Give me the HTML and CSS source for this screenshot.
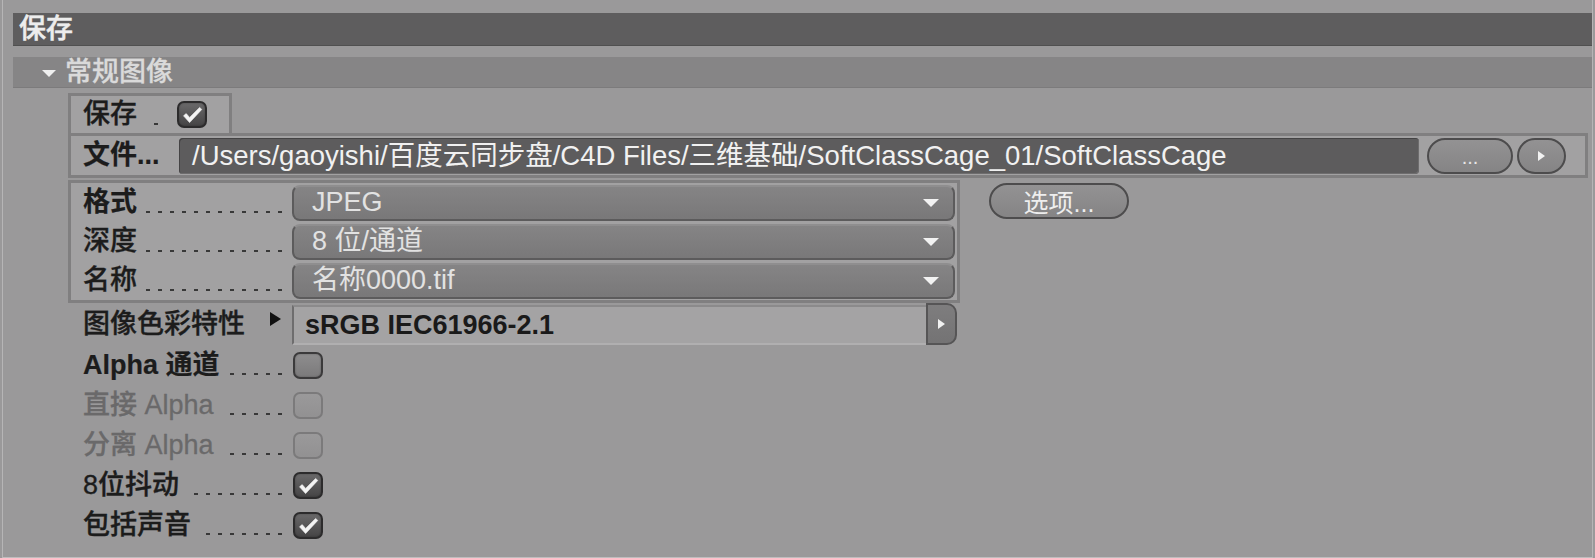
FILE: index.html
```html
<!DOCTYPE html>
<html lang="zh">
<head>
<meta charset="utf-8">
<title>保存</title>
<link rel="stylesheet" href="styles.css">
</head>
<body>
<div class="window">
  <div class="title">保存</div>
  <div class="section"><span class="tri-down"></span>常规图像</div>
  <div class="content">
    <div class="box box-save">
      <span class="lbl save-lbl">保存</span>
      <span class="leader short"></span>
      <span class="check on"><svg viewBox="0 0 30 27" width="30" height="27"><path d="M6.5 14.8 L9.2 12.6 L12.6 16.4 L22.6 6.4 L24.8 8.4 L12.6 21.6 Z" /></svg></span>
    </div>
    <div class="box box-file">
      <span class="lbl bold file-lbl">文件...</span>
      <div class="path">/Users/gaoyishi/百度云同步盘/C4D Files/三维基础/SoftClassCage_01/SoftClassCage</div>
      <div class="pill more">...</div>
      <div class="pill go"><span class="tri-right-w"></span></div>
    </div>
    <div class="format-row">
      <div class="box group">
        <div class="row grow">
          <div class="lbl-col"><span class="lbl bold">格式</span><span class="leader"></span></div>
          <div class="dropdown"><span>JPEG</span><span class="arr"></span></div>
        </div>
        <div class="row grow">
          <div class="lbl-col"><span class="lbl">深度</span><span class="leader"></span></div>
          <div class="dropdown"><span>8 位/通道</span><span class="arr"></span></div>
        </div>
        <div class="row grow">
          <div class="lbl-col"><span class="lbl">名称</span><span class="leader"></span></div>
          <div class="dropdown"><span>名称0000.tif</span><span class="arr"></span></div>
        </div>
      </div>
      <div class="pill options">选项...</div>
    </div>
    <div class="row profile">
      <div class="lbl-col"><span class="lbl">图像色彩特性</span><span class="tri-right-b"></span></div>
      <div class="profile-field">sRGB IEC61966-2.1</div>
      <div class="profile-btn"><span class="tri-right-w"></span></div>
    </div>
    <div class="row crow">
      <div class="lbl-col"><span class="lbl bold">Alpha 通道</span><span class="leader"></span></div>
      <span class="check"></span>
    </div>
    <div class="row crow">
      <div class="lbl-col"><span class="lbl dis">直接 Alpha</span><span class="leader"></span></div>
      <span class="check disabled"></span>
    </div>
    <div class="row crow">
      <div class="lbl-col"><span class="lbl dis">分离 Alpha</span><span class="leader"></span></div>
      <span class="check disabled"></span>
    </div>
    <div class="row crow">
      <div class="lbl-col"><span class="lbl">8位抖动</span><span class="leader"></span></div>
      <span class="check on"><svg viewBox="0 0 30 27" width="30" height="27"><path d="M6.5 14.8 L9.2 12.6 L12.6 16.4 L22.6 6.4 L24.8 8.4 L12.6 21.6 Z" /></svg></span>
    </div>
    <div class="row crow">
      <div class="lbl-col"><span class="lbl">包括声音</span><span class="leader"></span></div>
      <span class="check on"><svg viewBox="0 0 30 27" width="30" height="27"><path d="M6.5 14.8 L9.2 12.6 L12.6 16.4 L22.6 6.4 L24.8 8.4 L12.6 21.6 Z" /></svg></span>
    </div>
  </div>
</div>
</body>
</html>
```

FILE: styles.css
```css
* { box-sizing: border-box; }

body {
  margin: 0;
  background: #9a999a;
  font-family: "Liberation Sans", "Noto Sans CJK SC", sans-serif;
  font-size: 27px;
  color: #1c1c1c;
}

.window {
  height: 558px;
  margin: 0 2px;
  border-left: 1px solid #b6b5b6;
  border-right: 1px solid #b6b5b6;
  border-bottom: 1px solid #bebdbe;
  padding: 13px 0 0 10px;
  overflow: hidden;
}

.title {
  height: 33px;
  background: #5e5d5e;
  color: #ededed;
  line-height: 33px;
  padding-left: 6px;
  font-weight: 500;
  -webkit-text-stroke: 0.5px #ededed;
  box-shadow: inset 0 -1px 0 #505050;
}

.section {
  margin-top: 11px;
  height: 31px;
  background: #868586;
  color: #dadada;
  display: flex;
  align-items: center;
  padding-left: 29px;
  line-height: 31px;
  font-weight: 500;
  -webkit-text-stroke: 0.3px #dadada;
  box-shadow: inset 0 -1px 0 #7c7b7c;
}

.tri-down {
  width: 0;
  height: 0;
  border-left: 7px solid transparent;
  border-right: 7px solid transparent;
  border-top: 7px solid #efefef;
  margin-right: 9px;
  margin-top: 2px;
}

.content {
  padding: 5px 0 0 55px;
}

.box {
  border: 3px solid #807f80;
  background: #a2a1a2;
}

.lbl {
  white-space: nowrap;
  line-height: 1;
  font-weight: 500;
  -webkit-text-stroke: 0.35px #1c1c1c;
}
.lbl.bold { font-weight: bold; -webkit-text-stroke: 0.2px #1c1c1c; }
.lbl.dis { color: #6a696a; -webkit-text-stroke: 0.3px #6a696a; }

.leader {
  flex: 1;
  height: 2px;
  margin: 18px 10px 0 8px;
  background: repeating-linear-gradient(to left, #383838 0 4px, transparent 4px 12px);
}

.box-save {
  width: 164px;
  height: 43px;
  display: flex;
  align-items: center;
  padding: 0 21px 0 12px;
}
.save-lbl { width: 54px; }
.leader.short {
  flex: none;
  width: 4px;
  margin: 18px 19px 0 17px;
}

.check {
  width: 30px;
  height: 27px;
  border-radius: 7px;
  border: 2px solid #3b3a3b;
  background: linear-gradient(#8e8d8e, #7b7a7b);
  display: flex;
  flex: none;
  box-shadow: inset 0 0 2px rgba(0,0,0,0.3);
}
.check svg {
  margin: -2px;
}
.check svg path {
  fill: #f4f4f4;
  stroke: #f4f4f4;
  stroke-width: 0.6;
  stroke-linejoin: round;
}
.check.on {
  background: linear-gradient(#6a696a, #454445);
  border-color: #2c2b2c;
}
.check.disabled {
  border-color: #7b7a7b;
  background: linear-gradient(#9a999a, #929192);
  box-shadow: none;
}

.box-file {
  margin-top: -3px;
  margin-right: 4px;
  height: 45px;
  display: flex;
  align-items: center;
  padding: 0 19px 0 12px;
}
.file-lbl { width: 96px; }

.path {
  flex: 1;
  height: 36px;
  background: #5d5c5d;
  border-radius: 4px;
  color: #f1f1f1;
  font-size: 27.5px;
  line-height: 36px;
  padding-left: 13px;
  white-space: nowrap;
  overflow: hidden;
  box-shadow: inset 1px 1px 0 #444344, inset -1px -1px 0 #6e6d6e;
}

.pill {
  height: 36px;
  border-radius: 18px;
  border: 2px solid #4d4c4d;
  background: linear-gradient(#939293, #858485);
  display: flex;
  align-items: center;
  justify-content: center;
  color: #e6e6e6;
  flex: none;
}
.more {
  width: 86px;
  margin-left: 8px;
  font-size: 20px;
  padding-top: 4px;
}
.go {
  width: 49px;
  margin-left: 4px;
}
.tri-right-w {
  width: 0;
  height: 0;
  border-top: 5px solid transparent;
  border-bottom: 5px solid transparent;
  border-left: 7px solid #f2f2f2;
}

.format-row {
  display: flex;
  align-items: flex-start;
  margin-top: 2px;
}

.group {
  padding: 0 2px 0 12px;
}

.row {
  display: flex;
  align-items: center;
}

.lbl-col {
  width: 209px;
  display: flex;
  align-items: center;
  flex: none;
}

.grow { height: 39px; }

.dropdown {
  width: 663px;
  height: 36px;
  border-radius: 8px;
  background: linear-gradient(#858485, #797879);
  border: 2px solid #5c5b5c;
  border-top-color: #8f8e8f;
  color: #e2e2e2;
  display: flex;
  align-items: center;
  justify-content: space-between;
  padding: 0 14px 0 18px;
  white-space: nowrap;
  line-height: 1;
}
.arr {
  width: 0;
  height: 0;
  border-left: 8px solid transparent;
  border-right: 8px solid transparent;
  border-top: 8px solid #f2f2f2;
}

.options {
  width: 140px;
  margin: 3px 0 0 29px;
  font-size: 25px;
  color: #eeeeee;
}

.profile {
  height: 42px;
  padding-left: 15px;
}
.profile .lbl { width: 187px; }
.tri-right-b {
  width: 0;
  height: 0;
  border-top: 7px solid transparent;
  border-bottom: 7px solid transparent;
  border-left: 11px solid #111;
  margin-top: -10px;
}
.profile-field {
  width: 634px;
  height: 40px;
  margin-top: 2px;
  background: #a4a3a4;
  border-left: 2px solid #6e6d6e;
  border-top: 2px solid #8b8a8b;
  border-bottom: 2px solid #b0afb0;
  font-weight: bold;
  color: #1a1a1a;
  line-height: 36px;
  padding-left: 11px;
  white-space: nowrap;
}
.profile-btn {
  width: 31px;
  height: 42px;
  background: linear-gradient(#7e7d7e, #747374);
  border: 2px solid #565556;
  border-radius: 0 10px 10px 0;
  display: flex;
  align-items: center;
  justify-content: center;
}

.crow {
  height: 40px;
  padding-left: 15px;
}
.crow .check {
  margin-left: 1px;
}
```
